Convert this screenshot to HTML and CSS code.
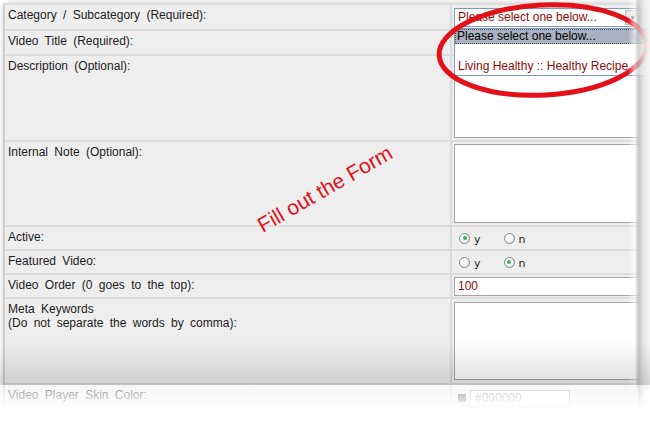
FILE: index.html
```html
<!DOCTYPE html>
<html lang="en">
<head>
    <meta charset="UTF-8">
    <title>Video Form</title>
    <link rel="stylesheet" href="styles.css">
</head>
<body>
    <div id="page">
        <div class="sheet">
            <div class="row r1">
                <div class="label">Category / Subcategory (Required):</div>
                <div class="field">
                    <div class="select">
                        <span class="select-text">Please select one below...</span>
                        <span class="select-btn">&#9662;</span>
                    </div>
                </div>
            </div>
            <div class="row r2">
                <div class="label">Video Title (Required):</div>
                <div class="field"></div>
            </div>
            <div class="row r3">
                <div class="label">Description (Optional):</div>
                <div class="field"><div class="area"></div></div>
            </div>
            <div class="row r4">
                <div class="label">Internal Note (Optional):</div>
                <div class="field"><div class="area"></div></div>
            </div>
            <div class="row r5">
                <div class="label">Active:</div>
                <div class="field radios">
                    <span class="radio checked"></span><span class="opt">y</span>
                    <span class="radio"></span><span class="opt">n</span>
                </div>
            </div>
            <div class="row r6">
                <div class="label">Featured Video:</div>
                <div class="field radios">
                    <span class="radio"></span><span class="opt">y</span>
                    <span class="radio checked"></span><span class="opt">n</span>
                </div>
            </div>
            <div class="row r7">
                <div class="label">Video Order (0 goes to the top):</div>
                <div class="field"><div class="input">100</div></div>
            </div>
            <div class="row r8">
                <div class="label">Meta Keywords<br>(Do not separate the words by comma):</div>
                <div class="field"><div class="area"></div></div>
            </div>
            <div class="row r9">
                <div class="label">Video Player Skin Color:</div>
                <div class="field skin">
                    <span class="swatch"></span>
                    <div class="color-input">#000000</div>
                </div>
            </div>
        </div>

        <!-- open dropdown list of the category select -->
        <div class="dropdown">
            <div class="dd-opt active">Please select one below...</div>
            <div class="dd-opt"></div>
            <div class="dd-opt red">Living Healthy :: Healthy Recipe</div>
        </div>

        <svg class="ring" width="650" height="120" viewBox="0 0 650 120">
            <ellipse cx="543" cy="50" rx="104" ry="45" fill="none" stroke="#e3101a" stroke-width="5" transform="rotate(-3 543 50)"/>
        </svg>

        <div class="note">Fill out the Form</div>

        <div class="edge-right"></div>
        <div class="shade-bottom"></div>
        <div class="fade"></div>
    </div>
</body>
</html>
```

FILE: styles.css
```css
* {
    margin: 0;
    padding: 0;
    box-sizing: border-box;
}

body, html {
    width: 650px;
    height: 430px;
    overflow: hidden;
    background-color: #fff;
    font-family: "Liberation Sans", Arial, sans-serif;
    font-size: 12px;
    color: #1c1c1c;
}

#page {
    position: relative;
    width: 650px;
    height: 430px;
    overflow: hidden;
}

.sheet {
    margin: 3px 0 0 3px;
    width: 635px;
    display: flex;
    flex-direction: column;
    gap: 2px;
    background-color: #dcdcdc;
    border-left: 2px solid #cfcfcf;
    border-top: 2px solid #dedede;
    overflow: hidden;
    box-shadow: 3px 2px 8px rgba(0, 0, 0, 0.35);
}

.row {
    display: grid;
    grid-template-columns: 445px 1fr;
    column-gap: 2px;
}

.r1 { height: 24px; }
.r2 { height: 23px; }
.r3 { height: 84px; }
.r4 { height: 83px; }
.r5, .r6, .r7 { height: 22px; }
.r8 { height: 84px; }
.r9 { height: 40px; }

.label {
    background-color: #eeeeee;
    padding: 3px 3px 0 3px;
    line-height: 14px;
    word-spacing: 3px;
}

.field {
    background-color: #eeeeee;
    padding: 3px 0 0 2px;
    overflow: hidden;
}

.select {
    display: flex;
    width: 188px;
    height: 19px;
    background-color: #fff;
    border: 1px solid #7f9db9;
    color: #8c0a0a;
    font-size: 12px;
    line-height: 17px;
}

.select-text {
    flex-grow: 1;
    padding-left: 3px;
}

.select-btn {
    width: 15px;
    margin: 1px;
    background-color: #e6e6e6;
    border: 1px solid #b8b8b8;
    font-size: 7px;
    line-height: 13px;
    text-align: center;
    color: #555;
}

.area {
    width: 200px;
    height: 79px;
    background-color: #fff;
    border: 1px solid #a4a4a4;
}

.r8 .area {
    height: 78px;
}

.r4 .field {
    padding-top: 2px;
}

.r7 .field {
    padding-top: 2px;
}

.input {
    width: 200px;
    height: 19px;
    background-color: #fff;
    border: 1px solid #a4a4a4;
    color: #8c0a0a;
    padding-left: 3px;
    line-height: 17px;
}

.radios {
    display: flex;
    align-items: center;
    padding: 0 0 0 7px;
}

.radio {
    width: 11px;
    height: 11px;
    border-radius: 50%;
    border: 1px solid #7d8590;
    background: radial-gradient(circle at 40% 35%, #fff 30%, #d6d9de 100%);
    display: flex;
    align-items: center;
    justify-content: center;
}

.radio.checked::after {
    content: "";
    width: 4px;
    height: 4px;
    border-radius: 50%;
    background-color: #37b54a;
}

.opt {
    margin: 3px 23px 0 4px;
    font-family: "DejaVu Sans", sans-serif;
    font-size: 11px;
}

.skin {
    display: flex;
    align-items: center;
    gap: 4px;
    padding: 0 0 14px 6px;
}

.swatch {
    width: 8px;
    height: 8px;
    background-color: #555;
}

.color-input {
    width: 100px;
    height: 17px;
    border: 1px solid #a4a4a4;
    background-color: #fff;
    color: #888;
    padding-left: 4px;
    line-height: 15px;
}

.dropdown {
    position: absolute;
    left: 454px;
    top: 28px;
    width: 200px;
    height: 48px;
    background-color: #fff;
    border: 1px solid #7f9db9;
    font-size: 12px;
}

.dd-opt {
    height: 15px;
    line-height: 14px;
    padding-left: 2px;
}

.dd-opt.active {
    background-color: #a9b0bf;
    outline: 1px dotted #555;
    outline-offset: -1px;
    color: #000;
}

.dd-opt.red {
    color: #8c0a0a;
    padding-left: 3px;
}

.ring {
    position: absolute;
    left: 0;
    top: 0;
}

.note {
    position: absolute;
    left: 235px;
    top: 177px;
    width: 180px;
    text-align: center;
    font-size: 21px;
    color: #e3101a;
    transform: rotate(-30deg);
    white-space: nowrap;
}

.edge-right {
    position: absolute;
    right: 0;
    top: 0;
    width: 22px;
    height: 390px;
    background: linear-gradient(to right, rgba(255, 255, 255, 0) 0%, rgba(255, 255, 255, 0.6) 30%, rgba(195, 195, 195, 0.7) 45%, rgba(232, 232, 232, 0.9) 75%, #f6f6f6 100%);
}

.shade-bottom {
    position: absolute;
    left: 0;
    top: 340px;
    width: 650px;
    height: 45px;
    background: linear-gradient(to bottom, rgba(0, 0, 0, 0) 0%, rgba(0, 0, 0, 0.13) 100%);
}

.fade {
    position: absolute;
    left: 0;
    top: 385px;
    width: 650px;
    height: 45px;
    background: linear-gradient(to bottom, rgba(255, 255, 255, 0.45) 0%, rgba(255, 255, 255, 0.75) 30%, #fff 55%);
}
```
